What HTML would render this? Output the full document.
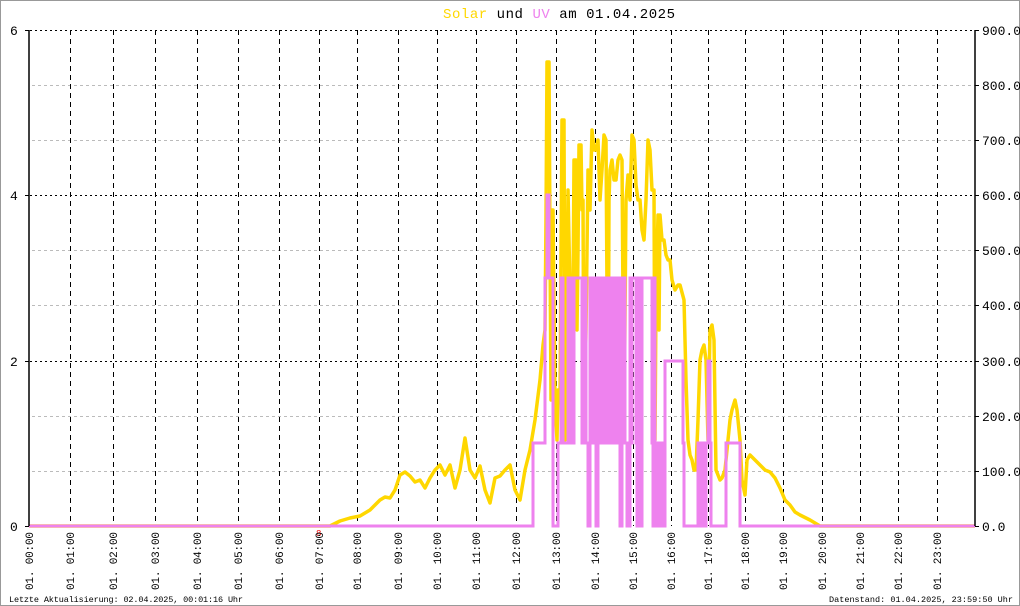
<!DOCTYPE html>
<html><head><meta charset="utf-8"><style>
html,body{margin:0;padding:0;background:#fff;}
svg{display:block;}
text{font-family:"Liberation Mono",monospace;}
</style></head><body>
<svg width="1020" height="606" viewBox="0 0 1020 606" xmlns="http://www.w3.org/2000/svg">
<rect x="0.5" y="0.5" width="1019" height="605" fill="#fff" stroke="#999"/>
<text x="443" y="18" font-size="14" textLength="232"><tspan fill="#ffd700">Solar</tspan><tspan fill="#000"> und </tspan><tspan fill="#ee82ee">UV</tspan><tspan fill="#000"> am 01.04.2025</tspan></text>

<g stroke="#bbb" stroke-dasharray="3,3" stroke-width="1">
<line x1="32" y1="471.5" x2="975" y2="471.5"/><line x1="32" y1="416.5" x2="975" y2="416.5"/>
<line x1="32" y1="305.5" x2="975" y2="305.5"/><line x1="32" y1="250.5" x2="975" y2="250.5"/>
<line x1="32" y1="140.5" x2="975" y2="140.5"/><line x1="32" y1="85.5" x2="975" y2="85.5"/>
</g>
<g stroke="#000" stroke-dasharray="2,3" stroke-width="1">
<line x1="30" y1="30.5" x2="975" y2="30.5"/><line x1="30" y1="195.5" x2="975" y2="195.5"/><line x1="30" y1="361.5" x2="975" y2="361.5"/>
</g>
<g stroke="#000" stroke-dasharray="5,4" stroke-width="1">
<line x1="70.5" y1="30" x2="70.5" y2="526"/><line x1="113.5" y1="30" x2="113.5" y2="526"/><line x1="155.5" y1="30" x2="155.5" y2="526"/>
<line x1="197.5" y1="30" x2="197.5" y2="526"/><line x1="238.5" y1="30" x2="238.5" y2="526"/><line x1="279.5" y1="30" x2="279.5" y2="526"/>
<line x1="319.5" y1="30" x2="319.5" y2="526"/><line x1="357.5" y1="30" x2="357.5" y2="526"/><line x1="398.5" y1="30" x2="398.5" y2="526"/>
<line x1="437.5" y1="30" x2="437.5" y2="526"/><line x1="476.5" y1="30" x2="476.5" y2="526"/><line x1="516.5" y1="30" x2="516.5" y2="526"/>
<line x1="556.5" y1="30" x2="556.5" y2="526"/><line x1="595.5" y1="30" x2="595.5" y2="526"/><line x1="633.5" y1="30" x2="633.5" y2="526"/>
<line x1="671.5" y1="30" x2="671.5" y2="526"/><line x1="708.5" y1="30" x2="708.5" y2="526"/><line x1="745.5" y1="30" x2="745.5" y2="526"/>
<line x1="783.5" y1="30" x2="783.5" y2="526"/><line x1="822.5" y1="30" x2="822.5" y2="526"/><line x1="860.5" y1="30" x2="860.5" y2="526"/>
<line x1="898.5" y1="30" x2="898.5" y2="526"/><line x1="937.5" y1="30" x2="937.5" y2="526"/>
</g>

<polyline fill="none" stroke="#ffd700" stroke-width="3.5" stroke-linejoin="round" points="29,526 330,526 340,521 350,518 360,516 370,510 375,505 380,500 385,497 390,498 395,490 400,475 405,472 410,476 415,482 420,480 425,488 430,478 435,470 440,465 445,475 450,465 455,488 460,470 465,438 470,470 475,478 480,466 485,490 490,503 495,478 500,476 505,470 510,465 515,490 520,500 525,470 530,450 535,420 540,380 543,345 545,330 546,220 547,62 549,62 550,240 551,400 552,210 553,210 555,400 557,440 558,390 560,400 562,120 564,120 565,440 567,300 568,190 570,290 571,440 573,300 574,160 576,160 577,330 578,250 579,145 581,145 582,210 583,200 584,440 586,330 588,170 590,210 592,130 594,150 596,150 598,140 600,200 602,170 604,135 606,140 608,440 609,200 610,170 612,160 614,180 616,180 618,160 620,155 622,160 624,440 626,200 628,175 630,200 632,135 634,140 636,185 638,200 640,200 642,230 644,240 646,200 648,140 650,150 652,190 654,190 655,440 656,300 658,215 659,330 660,215 662,240 664,240 666,255 668,260 670,260 672,280 675,290 678,285 680,285 684,300 686,380 688,440 690,455 692,460 694,470 696,470 698,420 700,360 702,350 704,345 706,360 708,440 710,330 712,325 714,340 716,470 718,475 720,480 722,478 725,470 727,450 730,420 732,410 735,400 737,410 740,440 742,480 745,495 747,460 750,455 755,460 760,465 765,470 770,472 775,478 780,488 785,500 790,505 795,512 800,515 810,520 820,526 975,526"/>

<path fill="none" stroke="#ee82ee" stroke-width="3" d="M29,526 H533 V443 H545 V278 H547 V195 H549 V278 H553 V526 H558 V443 H561 V278 H563 V443 H568 V278 H569 V443 H572 V278 H573 V443 H574 V278 H582 V443 H583 V278 H584 V443 H585 V278 H586 V443 H588 V526 H590 V278 H592 V443 H594 V278 H596 V526 H598 V278 H600 V443 H601 V278 H603 V443 H604 V278 H605 V443 H606 V278 H607 V443 H608 V278 H609 V443 H610 V278 H611 V443 H612 V278 H613 V443 H614 V278 H615 V443 H616 V278 H618 V443 H619 V278 H620 V526 H622 V278 H625 V443 H627 V526 H630 V278 H631 V443 H632 V278 H636 V443 H637 V526 H639 V278 H641 V526 H642 V278 H652 V443 H653 V526 H654 V278 H655 V526 H656 V443 H657 V526 H658 V443 H660 V526 H661 V443 H663 V526 H665 V361 H683 V443 H684 V526 H698 V443 H699 V526 H700 V443 H702 V526 H703 V443 H705 V526 H706 V443 H708 V361 H710 V443 H711 V526 H726 V443 H740 V526 H975"/>

<g stroke="#000" stroke-width="1.5">
<line x1="29" y1="30" x2="29" y2="526"/><line x1="975" y1="30" x2="975" y2="526"/>
</g>
<g stroke="#000" stroke-width="1">
<line x1="25" y1="30.5" x2="29" y2="30.5"/><line x1="25" y1="195.5" x2="29" y2="195.5"/><line x1="25" y1="361.5" x2="29" y2="361.5"/><line x1="25" y1="526.5" x2="29" y2="526.5"/>
<line x1="975" y1="30.5" x2="979" y2="30.5"/><line x1="975" y1="85.5" x2="979" y2="85.5"/><line x1="975" y1="140.5" x2="979" y2="140.5"/><line x1="975" y1="195.5" x2="979" y2="195.5"/><line x1="975" y1="250.5" x2="979" y2="250.5"/><line x1="975" y1="305.5" x2="979" y2="305.5"/><line x1="975" y1="361.5" x2="979" y2="361.5"/><line x1="975" y1="416.5" x2="979" y2="416.5"/><line x1="975" y1="471.5" x2="979" y2="471.5"/><line x1="975" y1="526.5" x2="979" y2="526.5"/>
</g>
<g font-size="13" fill="#000">
<text x="10" y="35">6</text><text x="10" y="200">4</text><text x="10" y="366">2</text><text x="10" y="531">0</text>
<text x="982" y="35">900.0</text><text x="982" y="90">800.0</text><text x="982" y="145">700.0</text><text x="982" y="200">600.0</text><text x="982" y="255">500.0</text><text x="982" y="310">400.0</text><text x="982" y="366">300.0</text><text x="982" y="421">200.0</text><text x="982" y="476">100.0</text><text x="982" y="531">0.0</text>
</g>
<text x="316" y="536" font-size="9" fill="#e00">8</text>

<g font-size="11" fill="#000" text-anchor="end">
<text transform="translate(33,532) rotate(-90)" textLength="58">01. 00:00</text>
<text transform="translate(74,532) rotate(-90)" textLength="58">01. 01:00</text>
<text transform="translate(117,532) rotate(-90)" textLength="58">01. 02:00</text>
<text transform="translate(159,532) rotate(-90)" textLength="58">01. 03:00</text>
<text transform="translate(201,532) rotate(-90)" textLength="58">01. 04:00</text>
<text transform="translate(242,532) rotate(-90)" textLength="58">01. 05:00</text>
<text transform="translate(283,532) rotate(-90)" textLength="58">01. 06:00</text>
<text transform="translate(323,532) rotate(-90)" textLength="58">01. 07:00</text>
<text transform="translate(361,532) rotate(-90)" textLength="58">01. 08:00</text>
<text transform="translate(402,532) rotate(-90)" textLength="58">01. 09:00</text>
<text transform="translate(441,532) rotate(-90)" textLength="58">01. 10:00</text>
<text transform="translate(480,532) rotate(-90)" textLength="58">01. 11:00</text>
<text transform="translate(520,532) rotate(-90)" textLength="58">01. 12:00</text>
<text transform="translate(560,532) rotate(-90)" textLength="58">01. 13:00</text>
<text transform="translate(599,532) rotate(-90)" textLength="58">01. 14:00</text>
<text transform="translate(637,532) rotate(-90)" textLength="58">01. 15:00</text>
<text transform="translate(675,532) rotate(-90)" textLength="58">01. 16:00</text>
<text transform="translate(712,532) rotate(-90)" textLength="58">01. 17:00</text>
<text transform="translate(749,532) rotate(-90)" textLength="58">01. 18:00</text>
<text transform="translate(787,532) rotate(-90)" textLength="58">01. 19:00</text>
<text transform="translate(826,532) rotate(-90)" textLength="58">01. 20:00</text>
<text transform="translate(864,532) rotate(-90)" textLength="58">01. 21:00</text>
<text transform="translate(902,532) rotate(-90)" textLength="58">01. 22:00</text>
<text transform="translate(941,532) rotate(-90)" textLength="58">01. 23:00</text>
</g>
<text x="9" y="602" font-size="8.5" fill="#000" textLength="234">Letzte Aktualisierung: 02.04.2025, 00:01:16 Uhr</text>
<text x="829" y="602" font-size="8.5" fill="#000" textLength="184">Datenstand: 01.04.2025, 23:59:50 Uhr</text>
</svg>
</body></html>
